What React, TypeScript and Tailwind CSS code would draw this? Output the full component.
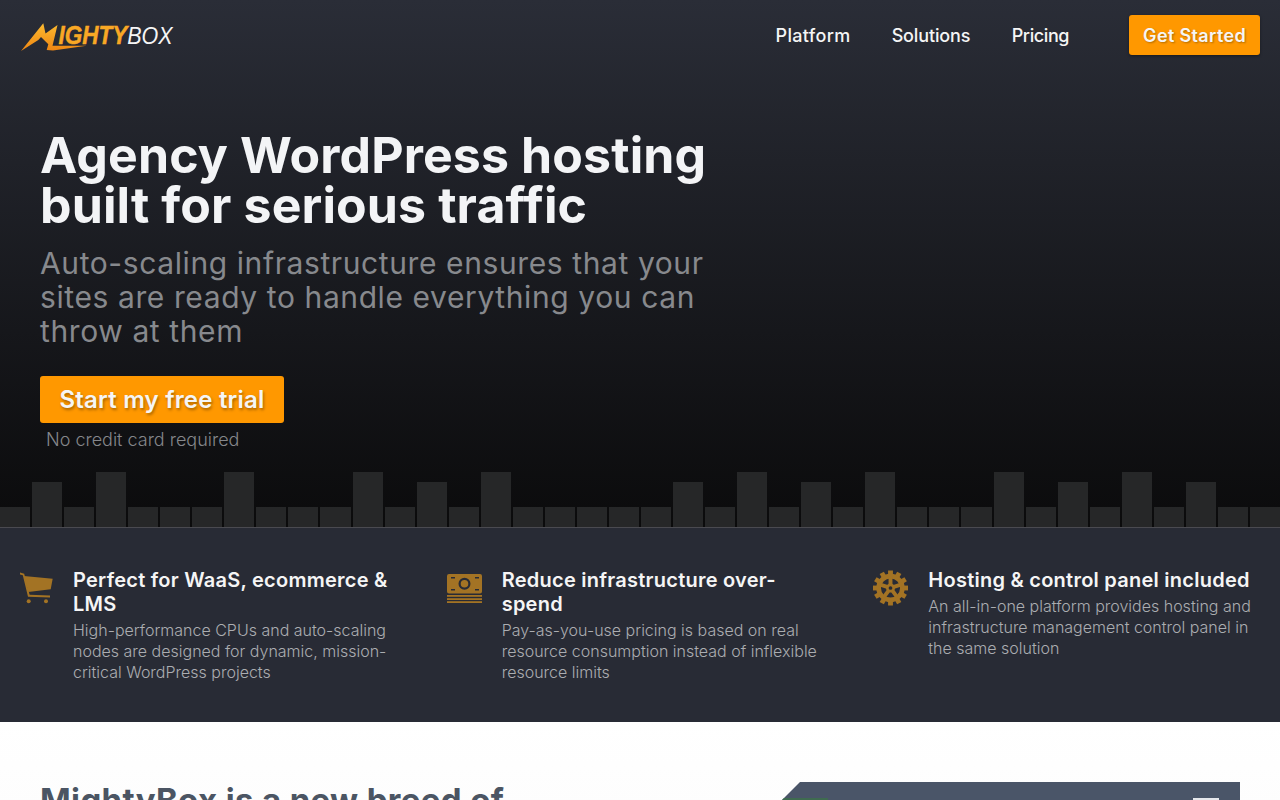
const barHeights: Record<string, string> = {
  S: "h-[20px]",
  M: "h-[45px]",
  T: "h-[55px]",
};

const barPattern = "SMSTSSSTSSSTSMSTSSSSSMSTSMSTSSSTSMSTSMSS".split("");

function Logo() {
  return (
    <svg width="156" height="36" viewBox="0 0 156 36" className="mt-[2px] block">
      <defs>
        <linearGradient id="logoGold" x1="0" y1="0" x2="0" y2="1">
          <stop offset="0" stopColor="#fdbb30" />
          <stop offset="1" stopColor="#ee8512" />
        </linearGradient>
      </defs>
      <path
        d="M1 33 L23.3 5.3 L25.5 15.5 L37.5 7 L32.5 27.7 L66.7 27.7 L33 32.5 L26.7 32 L28.3 26.3 L21 19 L18.3 22 Z"
        fill="url(#logoGold)"
      />
      <text
        transform="translate(38.5 26) scale(1 1.14)"
        style={{ fontFamily: '"Liberation Sans", sans-serif', fontStyle: "italic" }}>
        <tspan fill="#f9a825" stroke="#f9a825" strokeWidth="0.4" style={{ fontSize: 22.5, fontWeight: 700 }}>
          IGHTY
        </tspan>
        <tspan fill="#f5f5f5" style={{ fontSize: 21.5, fontWeight: 400 }}>
          BOX
        </tspan>
      </text>
    </svg>
  );
}

function CartIcon() {
  return (
    <svg width="33" height="32" viewBox="0 0 33 32" className="mt-[4px] shrink-0" fill="#a37324">
      <path d="M0 0.6 L4.2 1.8 L9.6 22.8 L30 23.6 L30 25.4 L8 24.8 L2.8 3.2 L0 2.4 Z" />
      <path d="M4 4 L32.7 6.7 L30.7 17.3 L8.3 20 Z" />
      <circle cx="8.7" cy="29.3" r="2" />
      <circle cx="26" cy="29.3" r="2" />
    </svg>
  );
}

function MoneyIcon() {
  return (
    <svg width="35" height="29" viewBox="0 0 35 29" className="mt-[6px] shrink-0" fill="#a37324">
      <path
        fillRule="evenodd"
        d="M2 0 H33 A2 2 0 0 1 35 2 V17.5 A2 2 0 0 1 33 19.5 H2 A2 2 0 0 1 0 17.5 V2 A2 2 0 0 1 2 0 Z M17.5 3.8 A6 6 0 1 0 17.5 15.8 A6 6 0 1 0 17.5 3.8 Z M17.5 6 A3.8 3.8 0 1 1 17.5 13.6 A3.8 3.8 0 1 1 17.5 6 Z M4 3 V4.6 H8 V3 Z M28 3 V4.6 H32 V3 Z M4 15 V16.6 H8 V15 Z M28 15 V16.6 H32 V15 Z"
      />
      <rect x="0" y="21" width="35" height="1.8" />
      <rect x="0" y="24.2" width="35" height="1.8" />
      <rect x="0" y="27.2" width="35" height="1.8" />
    </svg>
  );
}

function GearIcon() {
  const teeth = Array.from({ length: 12 }, (_, i) => i * 30);
  const spokes = [0, 72, 144, 216, 288];
  return (
    <svg width="35" height="36" viewBox="-18 -18 36 36" className="mt-[2px] shrink-0">
      {teeth.map((a) => (
        <rect key={a} x="-2.5" y="-18" width="5" height="6" fill="#a37324" transform={`rotate(${a})`} />
      ))}
      <circle r="12.2" fill="none" stroke="#a37324" strokeWidth="4.8" />
      {spokes.map((a) => (
        <rect key={a} x="-2" y="-12" width="4" height="10" fill="#a37324" transform={`rotate(${a})`} />
      ))}
      <circle r="4.6" fill="#a37324" />
      <circle r="1.9" fill="#282b35" />
    </svg>
  );
}

const features = [
  {
    icon: <CartIcon />,
    title: "Perfect for WaaS, ecommerce & LMS",
    text: "High-performance CPUs and auto-scaling nodes are designed for dynamic, mission-critical WordPress projects",
  },
  {
    icon: <MoneyIcon />,
    title: "Reduce infrastructure over-spend",
    text: "Pay-as-you-use pricing is based on real resource consumption instead of inflexible resource limits",
  },
  {
    icon: <GearIcon />,
    title: "Hosting & control panel included",
    text: "An all-in-one platform provides hosting and infrastructure management control panel in the same solution",
  },
];

export default function App() {
  return (
    <div className="h-[800px] overflow-hidden bg-white font-['Inter',sans-serif]">
      <section className="bg-gradient-to-b from-[#2a2d37] to-[#0b0b0c]">
        <header className="flex items-center justify-between pl-5 pr-5 pt-[15px]">
          <Logo />
          <nav className="flex items-center text-[18px] font-medium text-[#f5f5f5]">
            <a className="mr-[41px] tracking-[0.35px]">Platform</a>
            <a className="mr-[41.5px] tracking-[-0.15px]">Solutions</a>
            <a className="mr-[60px] tracking-[-0.4px]">Pricing</a>
            <button className="h-10 rounded-[3px] bg-[#ff9800] px-[14px] text-[18px] font-semibold tracking-[0.35px] text-[#f5f5f5] shadow-[0_1px_3px_rgba(0,0,0,0.4)] [text-shadow:1px_1px_2px_rgba(0,0,0,0.3)]">
              Get Started
            </button>
          </nav>
        </header>

        <div className="w-[720px] pl-10 pt-[75px]">
          <h1 className="text-[50px] font-bold leading-[50px] tracking-[0.12px] text-[#f3f4f6]">
            Agency WordPress hosting built for serious traffic
          </h1>
          <p className="mt-[16px] text-[30px] font-normal leading-[34px] tracking-[0.6px] text-[#87898d]">
            Auto-scaling infrastructure ensures that your sites are ready to handle everything you can throw at them
          </p>
          <button className="mt-[28px] block h-[47px] w-[244px] rounded-[3px] bg-[#ff9800] text-[24px] font-semibold tracking-[0.2px] text-[#f5f5f5] [text-shadow:1px_2px_3px_rgba(0,0,0,0.35)]">
            Start my free trial
          </button>
          <p className="mt-[6px] pl-[6px] text-[18px] font-light leading-[22px] text-[#85878b]">
            No credit card required
          </p>
        </div>

        <div className="mt-[21px] grid h-[55px] grid-cols-[repeat(40,minmax(0,1fr))] items-end gap-x-[2px]">
          {barPattern.map((kind, i) => (
            <div key={i} className={`${barHeights[kind]} bg-[#262728]`} />
          ))}
        </div>
      </section>

      <section className="grid h-[195px] grid-cols-3 border-t border-[#4a4a50] bg-[#282b35]">
        {features.map((f) => (
          <div key={f.title} className="flex items-start pl-5 pr-5 pt-10">
            <div className="mr-5">{f.icon}</div>
            <div>
              <h3 className="text-[20px] font-semibold leading-6 tracking-[0.25px] text-[#f5f5f5]">{f.title}</h3>
              <p className="mt-[4px] text-[16px] font-light leading-[21px] text-[#abadb1]">{f.text}</p>
            </div>
          </div>
        ))}
      </section>

      <section className="grid grid-cols-2 bg-gradient-to-b from-white to-[#f9f9f9] pl-10 pr-10 pt-[60px]">
        <h2 className="text-[33px] font-bold leading-9 tracking-[0.35px] text-[#4b5563]">MightyBox is a new breed of</h2>
        <div className="relative ml-[140px] h-[200px] bg-[#4a5568] [clip-path:polygon(20px_0,100%_0,100%_100%,0_100%,0_20px)]">
          <div className="absolute left-0 top-[16px] h-2 w-[48px] bg-[#3f6b50]" />
          <div className="absolute right-[21px] top-[16px] h-2 w-[26px] bg-[#e5e7eb]" />
        </div>
      </section>
    </div>
  );
}
